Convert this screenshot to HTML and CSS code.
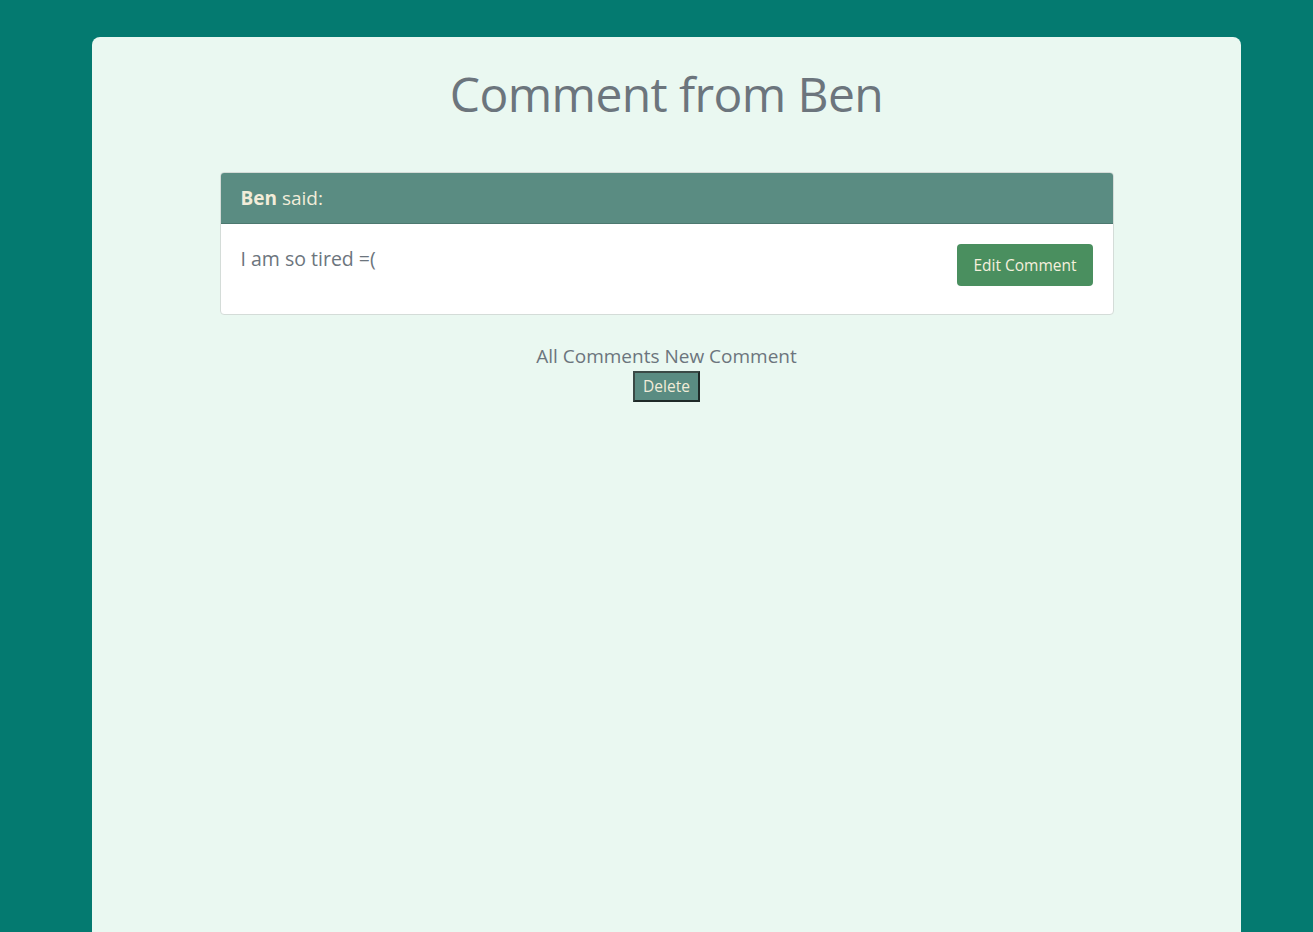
FILE: index.html
```html
<!DOCTYPE html>
<html lang="en">
<head>
<meta charset="utf-8">
<title>Comment from Ben</title>
<link rel="stylesheet" href="styles.css">
</head>
<body>
<div class="page">
  <h1 class="title">Comment from Ben</h1>
  <div class="card">
    <div class="card-header"><strong>Ben</strong> said:</div>
    <div class="card-body">
      <p class="comment-text">I am so tired =(</p>
      <a class="btn-edit" href="#">Edit Comment</a>
    </div>
  </div>
  <div class="links">
    <a href="#">All Comments</a> <a href="#">New Comment</a>
  </div>
  <form class="delete-form">
    <button class="btn-delete" type="button">Delete</button>
  </form>
</div>
</body>
</html>
```

FILE: styles.css
```css
html, body {
  margin: 0;
  padding: 0;
}
body {
  background: #047a70;
  font-family: "Open Sans", "Noto Sans", sans-serif;
  color: #6c757d;
}
.page {
  margin: 37px 72px 0 92px;
  min-height: 100vh;
  background: #eaf8f1;
  border-radius: 8px 8px 0 0;
  box-sizing: border-box;
  padding-top: 27px;
  display: flex;
  flex-direction: column;
  align-items: center;
}
.title {
  margin: 0 0 48px;
  font-size: 48px;
  letter-spacing: -0.6px;
  font-weight: 400;
  line-height: 60px;
  color: #6c757d;
}
.card {
  width: 894px;
  background: #fff;
  border: 1px solid #d4dcd8;
  border-radius: 4px;
  box-sizing: border-box;
  overflow: hidden;
}
.card-header {
  background: #5a8c82;
  color: #f2ecd9;
  font-size: 19px;
  line-height: 30px;
  padding: 10px 20px;
  border-bottom: 1px solid #4c786f;
}
.card-header strong {
  font-weight: 700;
}
.card-body {
  display: flex;
  justify-content: space-between;
  align-items: flex-start;
  padding: 20px 20px 28px;
}
.comment-text {
  margin: 0;
  font-size: 19.5px;
  line-height: 30px;
  color: #6c757d;
}
.btn-edit {
  display: inline-block;
  background: #4a8f5f;
  color: #f5f0dd;
  text-decoration: none;
  font-size: 15.5px;
  line-height: 22px;
  padding: 10px 16px;
  border-radius: 4px;
}
.links {
  margin-top: 27px;
  font-size: 19px;
  line-height: 28px;
}
.links a {
  color: #6c757d;
  text-decoration: none;
}
.delete-form {
  margin: 0;
  padding-top: 1px;
}
.btn-delete {
  font-family: "Open Sans", "Noto Sans", sans-serif;
  background: #5a8c82;
  color: #f2ecd9;
  font-size: 15.5px;
  line-height: 23px;
  padding: 2px 8px;
  border: 2px solid #1f2a28;
  border-top-color: #3a4a46;
  border-left-color: #3a4a46;
}
```
